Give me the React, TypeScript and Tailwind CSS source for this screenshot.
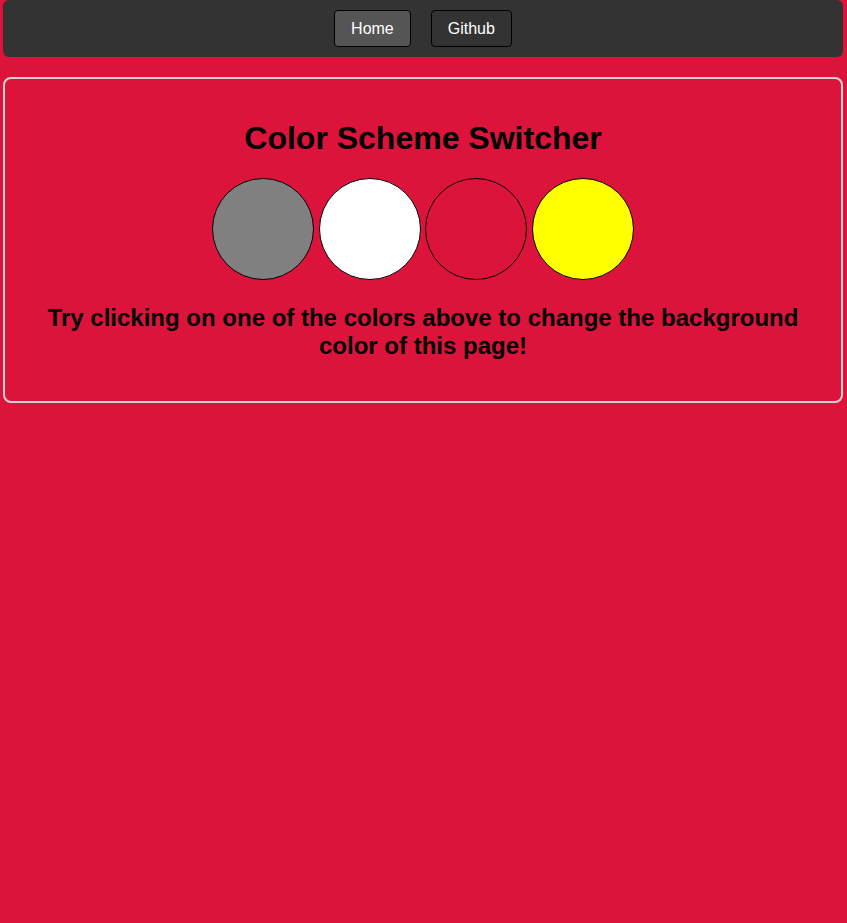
import React, { useState } from 'react';

const colors = ['#808080', '#ffffff', '#dc143c', '#ffff00'];

const App: React.FC = () => {
  const [bg, setBg] = useState('#dc143c');

  return (
    <div
      className="min-h-screen pl-[3px] pr-[4px] font-['Liberation_Sans',Arial,sans-serif]"
      style={{ backgroundColor: bg }}
    >
      <nav className="flex h-[57px] items-center justify-center gap-5 rounded-[6px] bg-[#333333]">
        <button className="h-[37px] rounded-[4px] border border-black bg-[#555555] px-4 text-base text-white">
          Home
        </button>
        <button className="h-[37px] rounded-[4px] border border-black bg-[#333333] px-4 text-base text-white">
          Github
        </button>
      </nav>

      <div className="mt-5 rounded-[8px] border-2 border-[#d4d4d4] px-5 pt-[41px] pb-[41px] text-center text-black">
        <h1 className="text-[32px] font-bold leading-[37px]">Color Scheme Switcher</h1>
        <div className="mt-[21px] flex justify-center gap-[4.6px]">
          {colors.map((c) => (
            <button
              key={c}
              onClick={() => setBg(c)}
              className="h-[102px] w-[102px] rounded-full border border-black"
              style={{ backgroundColor: c }}
            />
          ))}
        </div>
        <p className="mt-6 text-2xl font-bold leading-[28px]">
          Try clicking on one of the colors above to change the background color of this page!
        </p>
      </div>
    </div>
  );
};

export default App;
